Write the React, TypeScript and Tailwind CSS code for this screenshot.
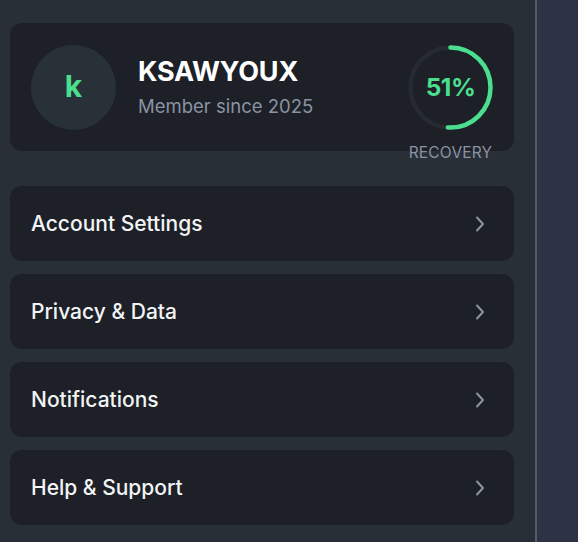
import React from "react";

const items = ["Account Settings", "Privacy & Data", "Notifications", "Help & Support"];

function Chevron() {
  return (
    <svg width="12" height="18" viewBox="0 0 12 18" fill="none" className="shrink-0">
      <path d="M3 2.5 L9 9 L3 15.5" stroke="#8b94a3" strokeWidth="2" strokeLinecap="round" strokeLinejoin="round" />
    </svg>
  );
}

function Ring() {
  const r = 40;
  const c = 2 * Math.PI * r;
  const pct = 0.51;
  return (
    <div className="relative w-[85px] h-[85px]">
      <svg width="85" height="85" viewBox="0 0 85 85" className="absolute inset-0">
        <circle cx="42.5" cy="42.5" r={r} stroke="#262a31" strokeWidth="4.5" fill="none" />
        <circle
          cx="42.5"
          cy="42.5"
          r={r}
          stroke="#4ade8e"
          strokeWidth="4.5"
          fill="none"
          strokeLinecap="round"
          strokeDasharray={`${c * pct} ${c}`}
          transform="rotate(-90 42.5 42.5)"
        />
      </svg>
      <div className="absolute inset-0 flex items-center justify-center text-[24.5px] font-bold text-[#4ade8e] tracking-[-0.5px]">
        51%
      </div>
    </div>
  );
}

export default function App() {
  return (
    <div
      className="flex w-[578px] h-[542px] overflow-hidden"
      style={{ fontFamily: "Inter, 'Noto Sans', sans-serif" }}
    >
      <div className="w-[535px] h-full bg-[#292f37] pl-[10px] pr-[21px] pt-[23px] flex flex-col">
        <div className="h-[128px] rounded-[12px] bg-[#1d2027] flex items-center pl-[21px] pr-[21px]">
          <div className="w-[85px] h-[85px] rounded-full bg-[#283137] flex items-center justify-center text-[30px] font-bold text-[#4ade8e] leading-none pb-[2px]">
            k
          </div>
          <div className="ml-[22px] flex flex-col flex-1">
            <div className="text-[27px] font-bold text-white leading-[32px] tracking-[-0.2px]">KSAWYOUX</div>
            <div className="text-[18.5px] text-[#8a93a3] leading-[24px] mt-[6px]">Member since 2025</div>
          </div>
          <div className="relative">
            <Ring />
            <div className="absolute left-1/2 -translate-x-1/2 top-[100px] text-[15.5px] text-[#8a93a3] tracking-[0.2px] leading-none whitespace-nowrap">
              RECOVERY
            </div>
          </div>
        </div>
        <div className="mt-[35px] flex flex-col gap-[13px]">
          {items.map((t) => (
            <div
              key={t}
              className="h-[75px] rounded-[12px] bg-[#1d2027] flex items-center justify-between pl-[21px] pr-[28px]"
            >
              <span className="text-[21px] font-medium text-[#f3f4f6]">{t}</span>
              <Chevron />
            </div>
          ))}
        </div>
      </div>
      <div className="w-[2px] h-full bg-[#555b6b]" />
      <div className="flex-1 h-full bg-[#2d3244]" />
    </div>
  );
}
